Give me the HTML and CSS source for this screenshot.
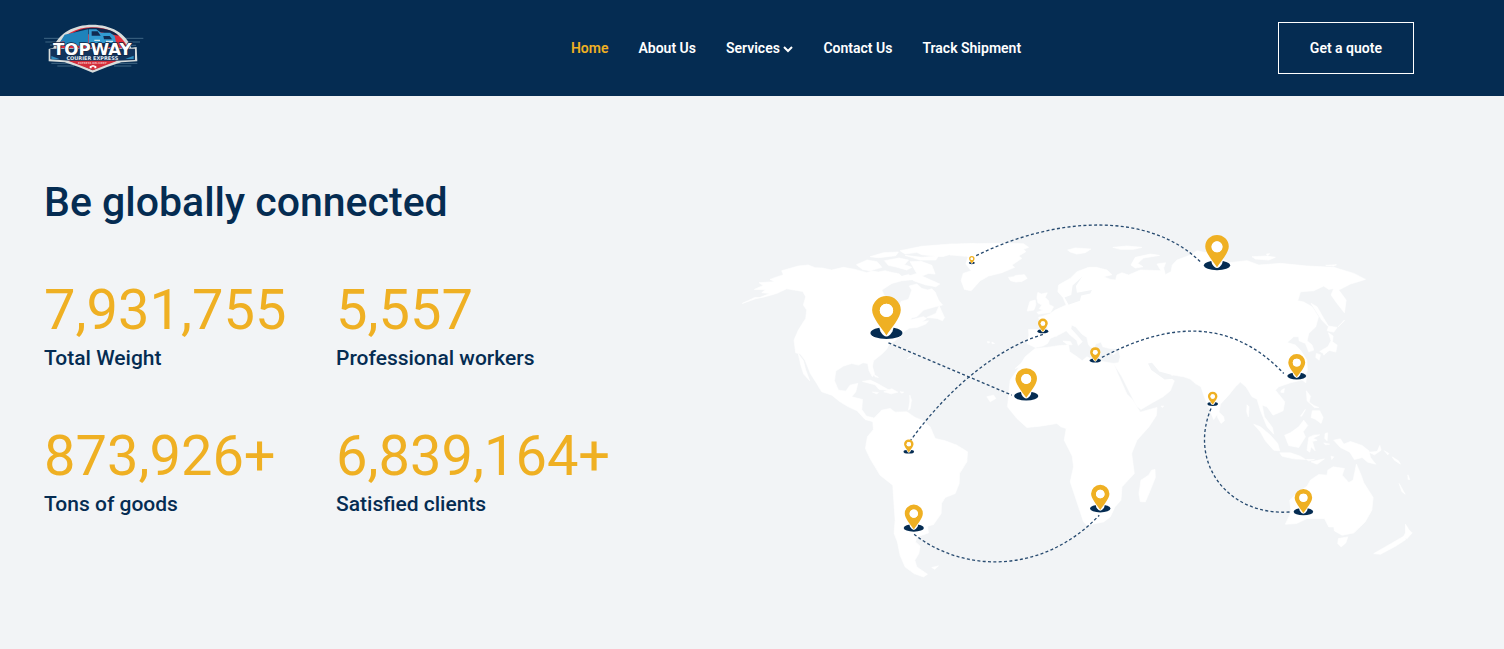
FILE: index.html
```html
<!DOCTYPE html>
<html lang="en">
<head>
<meta charset="utf-8">
<meta name="viewport" content="width=device-width, initial-scale=1">
<title>Topway Courier Express</title>
<link rel="stylesheet" href="styles.css">
</head>
<body>
<header class="site-header">
  <a class="logo" href="#" aria-label="Topway Courier Express">
    <svg viewBox="0 0 300 150" class="logo-art">
      <g stroke="#6f95ac" stroke-width="3" opacity=".55">
        <path d="M0 46H60M4 57H50M18 66H60M235 46H298M245 57H288M240 67H276M22 121H80M40 129H90M220 121H280M210 129H262"/>
      </g>
      <path d="M14 78L28 74C44 30 90 5 145 5S246 30 262 74L278 72 280 115 232 118Q190 131 146 149Q104 131 62 118L14 115Z" fill="#d8dddc"/>
      <path d="M39 75C55 34 96 13 145 13S235 34 251 75Z" fill="#e22e3b"/>
      <path d="M70 44C92 20 125 14 148 14S210 20 224 38L170 28Z" fill="#11264b"/>
      <path d="M62 35L132 19V68H45L62 54L48 58Z" fill="#1e83bb"/>
      <path d="M134 19H157L171 29H198L212 39 217 63 200 67H134Z" fill="#329bd1"/>
      <path d="M143 25H161L170 38H143ZM178 39H197L204 49H180ZM134 60H218V72H134Z" fill="#102b51"/>
      <path d="M151 52H168M186 55H207" stroke="#cde5ec" stroke-width="4"/>
      <path d="M19 77H273V111L216 113Q182 123 146 142Q110 123 76 113L19 109Z" fill="#12345c"/>
      <path d="M72 113H220L147 142Z" fill="#d42d3a"/>
      <path d="M22 99L48 109H22ZM269 98L244 108H269Z" fill="#328fc0"/>
      <text x="145" y="95" class="logo-name">TOPWAY</text>
      <text x="145" y="110" class="logo-sub">COURIER EXPRESS</text>
      <text x="145" y="123" class="logo-tag">EXPRESS DELIVERY</text>
      <path d="M137 136V130L147 126 157 130V136H151V131H143V136Z" fill="#fff"/>
    </svg>
  </a>
  <div class="header-main">
    <nav class="nav" aria-label="Main">
      <a href="#" class="active">Home</a>
      <a href="#">About Us</a>
      <a href="#">Services <svg class="chevron" viewBox="0 0 10 8"><path d="M1 2L5 6 9 2"/></svg></a>
      <a href="#">Contact Us</a>
      <a href="#">Track Shipment</a>
    </nav>
    <a class="quote" href="#">Get a quote</a>
  </div>
</header>
<main class="global">
  <section class="facts">
    <h1>Be globally connected</h1>
    <dl class="stats">
      <div class="stat"><dd>7,931,755</dd><dt>Total Weight</dt></div>
      <div class="stat"><dd>5,557</dd><dt>Professional workers</dt></div>
      <div class="stat"><dd>873,926+</dd><dt>Tons of goods</dt></div>
      <div class="stat"><dd>6,839,164+</dd><dt>Satisfied clients</dt></div>
    </dl>
  </section>
  <svg class="map" viewBox="0 0 2070 1110" role="img" aria-label="World map of shipping routes">
    <defs>
      <g id="pin">
        <ellipse cy="-11" rx="48" ry="18" fill="#052c52"/>
        <path d="M-25 -40L-18 -16Q0 14 18 -16L25 -40Z" fill="#fff"/>
        <path fill-rule="evenodd" d="M0 -4C-14 -25 -43 -57 -43 -80A43 42 0 0 1 43 -80C43 -57 14 -25 0 -4ZM0 -99A20 20 0 1 0 0 -59A20 20 0 1 0 0 -99Z" fill="#efb023"/>
        <circle cy="-79" r="20" fill="#fff"/>
      </g>
    </defs>
    <g class="land">
      <!-- North America -->
      <path d="M22 280L60 262 75 262 105 250 80 248 92 238 58 238 85 226 72 218 120 215 105 208 145 194 140 182 190 168 220 165 240 173 262 174 290 180 325 172 360 178 395 188 410 183 430 186 450 182 480 190 520 193 540 208 500 212 470 220 440 240 448 258 478 274 492 290 498 274 520 268 530 240 522 228 545 222 560 235 578 240 590 236 600 246 610 270 622 285 600 290 565 300 545 320 530 323 525 330 565 320 574 325 560 336 580 332 572 342 546 352 524 354 510 362 498 375 480 392 462 402 455 417 440 432 415 452 412 470 418 490 412 500 402 482 398 460 384 458 370 465 350 460 325 468 302 483 298 512 310 540 332 543 345 525 368 520 362 545 350 560 382 568 380 598 394 618 415 623 416 635 390 628 366 602 340 590 315 575 290 555 260 545 245 520 226 490 210 450 196 432 182 428 177 390 190 360 212 325 215 300 205 285 212 260 203 244 178 240 155 236 125 250 90 260 62 266Z"/>
      <path d="M190 432L205 452 212 480 224 512 206 492 198 468Z"/>
      <path d="M364 164L396 150 426 155 440 172 405 182 382 178ZM405 140L445 128 490 126 482 137 430 143ZM448 152L492 144 520 150 508 164 530 172 515 180 480 170 460 166ZM495 122L560 109 646 102 720 101 720 132 690 139 642 134 622 140 560 134 545 127 510 132ZM510 136L560 142 610 138 602 150 555 150ZM525 155L558 154 590 166 600 192 580 190 560 198 614 222 602 230 570 224 535 212 522 198 545 190ZM455 188L485 190 476 204 455 202ZM602 310L612 288 628 322 622 332 606 325 575 322Z"/>
      <path d="M382 514L405 510 430 522 462 540 432 538 420 524ZM446 545L470 536 488 546 468 551ZM412 546L430 547 425 551ZM495 545L506 546 500 549ZM413 488L418 494 430 502 420 500ZM516 446L530 436 528 441ZM524 555L529 570 525 595 520 600 524 575Z"/>
      <!-- Greenland and the North Atlantic -->
      <path d="M675 102L780 100 865 101 880 112 865 118 872 125 850 138 860 145 830 165 838 172 800 188 760 198 735 212 708 242 688 238 678 212 684 190 708 182 692 162 698 142 688 132 645 135 660 118Z"/>
      <path d="M820 202L835 200 842 196 868 194 876 205 860 214 842 216 826 212ZM908 247L918 252 936 248 930 262 940 272 942 284 955 290 946 307 910 312 905 307 924 300 912 296 920 285 908 278 905 262ZM880 288L884 274 900 270 902 284 896 300 876 303ZM757 394L764 396 758 399ZM770 396L778 400 771 401ZM840 475L855 462 864 456 852 472ZM755 560L775 555 782 565 765 575Z"/>
      <g transform="translate(675 0)">
        <!-- Europe and Asia -->
        <path d="M385 172L350 185 330 205 295 225 293 245 308 262 318 285 285 300 268 312 235 322 240 335 262 345 262 358 205 358 206 376 200 400 225 412 248 408 262 400 270 385 300 372 318 362 330 375 350 392 354 406 366 395 352 378 332 356 334 345 346 350 365 372 380 382 385 405 400 418 406 402 422 396 428 410 448 415 475 416 480 440 475 458 460 460 485 500 510 550 528 586 542 598 572 580 608 560 630 542 642 512 622 498 640 495 670 500 690 507 705 520 722 530 732 560 745 592 760 628 776 605 780 582 805 555 825 530 840 516 857 530 875 560 890 567 900 600 920 650 940 672 936 652 912 620 905 585 920 590 938 615 968 602 973 575 945 540 955 530 990 518 1030 508 1041 480 1039 450 1020 420 1005 405 980 397 1000 380 1015 380 1016 392 1035 400 1045 425 1060 420 1055 405 1040 392 1045 370 1066 350 1074 320 1055 290 1030 276 1012 272 1020 245 1060 242 1090 228 1105 238 1120 235 1112 255 1130 280 1152 308 1157 270 1135 240 1170 222 1215 208 1180 190 1120 172 1040 168 960 160 895 165 860 152 805 158 770 135 710 122 690 135 650 150 636 165 632 185 615 194 610 174 616 158 590 162 602 182 540 180 505 195 485 188 470 195 466 210 450 208 430 200 455 194 440 180 408 172Z"/>
        <path d="M322 120L345 114 392 117 375 128 350 132 330 126ZM458 112L500 108 545 112 520 118 480 118ZM512 165L525 142 570 132 598 136 550 144 532 160 548 170 525 174ZM875 140L920 138 945 142 925 150 885 147ZM1096 166L1128 164 1120 168ZM918 132L928 131 922 137Z"/>
        <path d="M1052 280L1070 290 1090 325 1104 348 1130 352 1120 366 1100 362 1104 350 1084 330ZM1104 368L1118 378 1116 395 1130 405 1126 426 1108 421 1090 430 1078 424 1102 410 1112 392ZM1068 430L1080 434 1076 450 1066 442ZM1088 428L1100 426 1090 435ZM1133 350L1152 330 1150 334ZM1026 510L1038 502 1036 518ZM963 540L972 535 970 548 961 546ZM770 600L790 620 792 632 782 640 772 622ZM308 393L330 394 336 404 322 404ZM280 362L288 360 290 378 282 378ZM400 430L422 430 412 434ZM455 430L468 426 460 434Z"/>
        <!-- Africa -->
        <path d="M225 415L260 412 300 406 325 405 328 425 350 440 366 452 380 440 400 450 460 460 472 490 500 552 516 568 540 606 590 592 588 616 566 650 530 690 514 730 522 790 485 830 482 870 464 890 450 920 430 935 380 945 370 935 345 860 330 815 340 770 336 738 312 690 318 655 302 650 290 640 240 648 200 652 170 625 142 590 147 540 150 510 172 478 195 440Z"/>
        <path d="M574 780L584 778 585 802 568 845 555 875 540 874 536 850 542 810 565 795ZM602 588L610 588 606 592Z"/>
      </g>
      <!-- South America -->
      <g transform="translate(315 540)">
        <path d="M78 88L100 86 125 60 150 55 165 66 200 65 225 82 245 90 270 110 285 145 315 152 350 165 382 185 380 215 358 250 357 280 345 310 315 322 304 340 303 370 280 403 262 408 265 428 230 440 226 455 240 468 236 490 224 510 230 530 262 552 250 560 222 550 195 530 180 495 172 455 162 430 165 390 158 285 120 255 90 205 76 175 82 140 100 118 98 92ZM275 532L295 527 284 537Z"/>
      </g>
      <!-- South-east Asia and Oceania -->
      <g transform="translate(1365 510)">
        <path d="M285 432L302 395 298 360 325 335 350 318 360 300 385 283 410 285 412 270 428 260 462 265 455 285 475 307 488 300 498 252 512 285 520 308 548 352 544 390 524 425 490 458 455 465 432 452 430 440 415 440 402 415 350 415 318 430Z"/>
        <path d="M444 475L472 470 466 488 452 500 442 490ZM645 432L655 448 665 458 650 475 638 472 645 458ZM640 468L646 478 615 498 570 522 550 520 595 494ZM190 132L210 140 240 165 262 190 268 212 250 210 225 182 210 155ZM268 218L300 218 330 228 345 238 310 236 275 228ZM283 165L300 158 325 140 340 120 352 136 338 155 345 170 325 202 295 196ZM355 172L370 165 388 164 368 174 380 180 366 184 374 212 362 200 358 216 350 210ZM348 32L360 48 356 66 370 76 385 82 372 82 350 62ZM366 92L388 92 398 112 392 130 376 118 362 112ZM330 108L345 88 334 108ZM430 180L450 176 460 192 480 184 515 196 535 212 540 232 556 252 532 246 515 232 492 238 478 216 450 202ZM535 216L560 214 568 196 572 210 552 224ZM362 245L402 236 380 252ZM348 238L372 238 355 242ZM404 160L412 158 410 182 403 175ZM582 212L595 220 592 224ZM605 230L624 242 630 252 612 240ZM626 310L644 342 634 334ZM652 284L658 298 653 298ZM400 188L418 192 405 194ZM170 74L176 80 174 110 169 95ZM422 228L430 230 424 238Z"/>
      </g>
    </g>
    <g class="water">
      <path d="M1042 198L1022 228 1025 248 1070 240 1065 250 1038 256 1034 272 1010 280 1000 284 988 262 1008 255 1012 226 1034 206ZM1238 460L1250 458 1272 484 1308 494 1312 506 1288 508 1265 492 1248 480ZM480 180L510 180 520 192 500 198Z"/>
    </g>
    <g class="routes">
      <path d="M723 137C960 20 1240 2 1397 157"/>
      <path d="M1100 442C1290 342 1480 316 1645 490"/>
      <path d="M460 398L830 555"/>
      <path d="M923 373C800 410 650 520 527 690"/>
      <path d="M537 972C680 1086 920 1096 1092 915"/>
      <path d="M1427 595C1358 760 1480 920 1667 905"/>
    </g>
    <use href="#pin" transform="translate(454 380)"/>
    <use href="#pin" transform="translate(873 566) scale(.75)"/>
    <use href="#pin" transform="translate(710 161) scale(.19)"/>
    <use href="#pin" transform="translate(923 367) scale(.34)"/>
    <use href="#pin" transform="translate(1080 455) scale(.36)"/>
    <use href="#pin" transform="translate(1445 175) scale(.82)"/>
    <use href="#pin" transform="translate(1684 504) scale(.59)"/>
    <use href="#pin" transform="translate(1432 585) scale(.33)"/>
    <use href="#pin" transform="translate(521 728) scale(.33)"/>
    <use href="#pin" transform="translate(536 960) scale(.63)"/>
    <use href="#pin" transform="translate(1095 902) scale(.64)"/>
    <use href="#pin" transform="translate(1704 911) scale(.61)"/>
  </svg>
</main>
</body>
</html>
```
FILE: styles.css
```css
* { box-sizing: border-box; }
body {
  margin: 0;
  background: #f2f4f6;
  color: #052c52;
  font-family: Roboto, "Liberation Sans", sans-serif;
}
a { color: inherit; text-decoration: none; }

.site-header {
  display: grid;
  grid-template-columns: 5fr 8fr;
  align-items: center;
  min-height: 96px;
  padding: 22px 90px 22px 44px;
  background: #052c52;
  color: #fff;
}
.logo { width: 100px; }
.logo-art { display: block; width: 100%; }
.logo-name {
  font: bold 50px "DejaVu Sans", sans-serif;
  fill: #fff;
  stroke: #12233f;
  stroke-width: 4px;
  paint-order: stroke;
  text-anchor: middle;
}
.logo-sub {
  font: bold 15px "DejaVu Sans", sans-serif;
  fill: #e2eaf0;
  text-anchor: middle;
}
.logo-tag {
  font: bold 8px "DejaVu Sans", sans-serif;
  fill: #f3b9bc;
  text-anchor: middle;
}
.header-main {
  display: flex;
  align-items: center;
  justify-content: space-between;
}
.nav {
  display: flex;
  gap: 30px;
  font-size: 14px;
  font-weight: 600;
  line-height: 20px;
}
.nav .active { color: #efb023; }
.chevron {
  width: 10px;
  height: 8px;
  fill: none;
  stroke: currentColor;
  stroke-width: 2;
}
.quote {
  padding: 15px 31px;
  border: 1px solid #fff;
  font-size: 14px;
  font-weight: 600;
  line-height: 20px;
}

.global {
  display: grid;
  grid-template-columns: 1fr 1fr;
  align-items: start;
  padding: 80px 79px 60px 44px;
}
h1 {
  margin: 0 0 50px;
  font-size: 41px;
  font-weight: 500;
  line-height: 52px;
}
.stats {
  display: grid;
  grid-template-columns: 292px 1fr;
  row-gap: 50px;
  margin: 0;
}
.stat { display: flex; flex-direction: column; }
.stat dd {
  margin: 0;
  color: #efb023;
  font-size: 56px;
  line-height: 64px;
}
.stat dt {
  font-size: 21px;
  font-weight: 500;
  line-height: 32px;
}
.map { display: block; width: 100%; margin-top: 34px; }
.land { fill: #fff; stroke: #fff; stroke-width: 2; stroke-linejoin: round; }
.water { fill: #f2f4f6; }
.routes {
  fill: none;
  stroke: #284b70;
  stroke-width: 4;
  stroke-dasharray: 9 7;
}
```
